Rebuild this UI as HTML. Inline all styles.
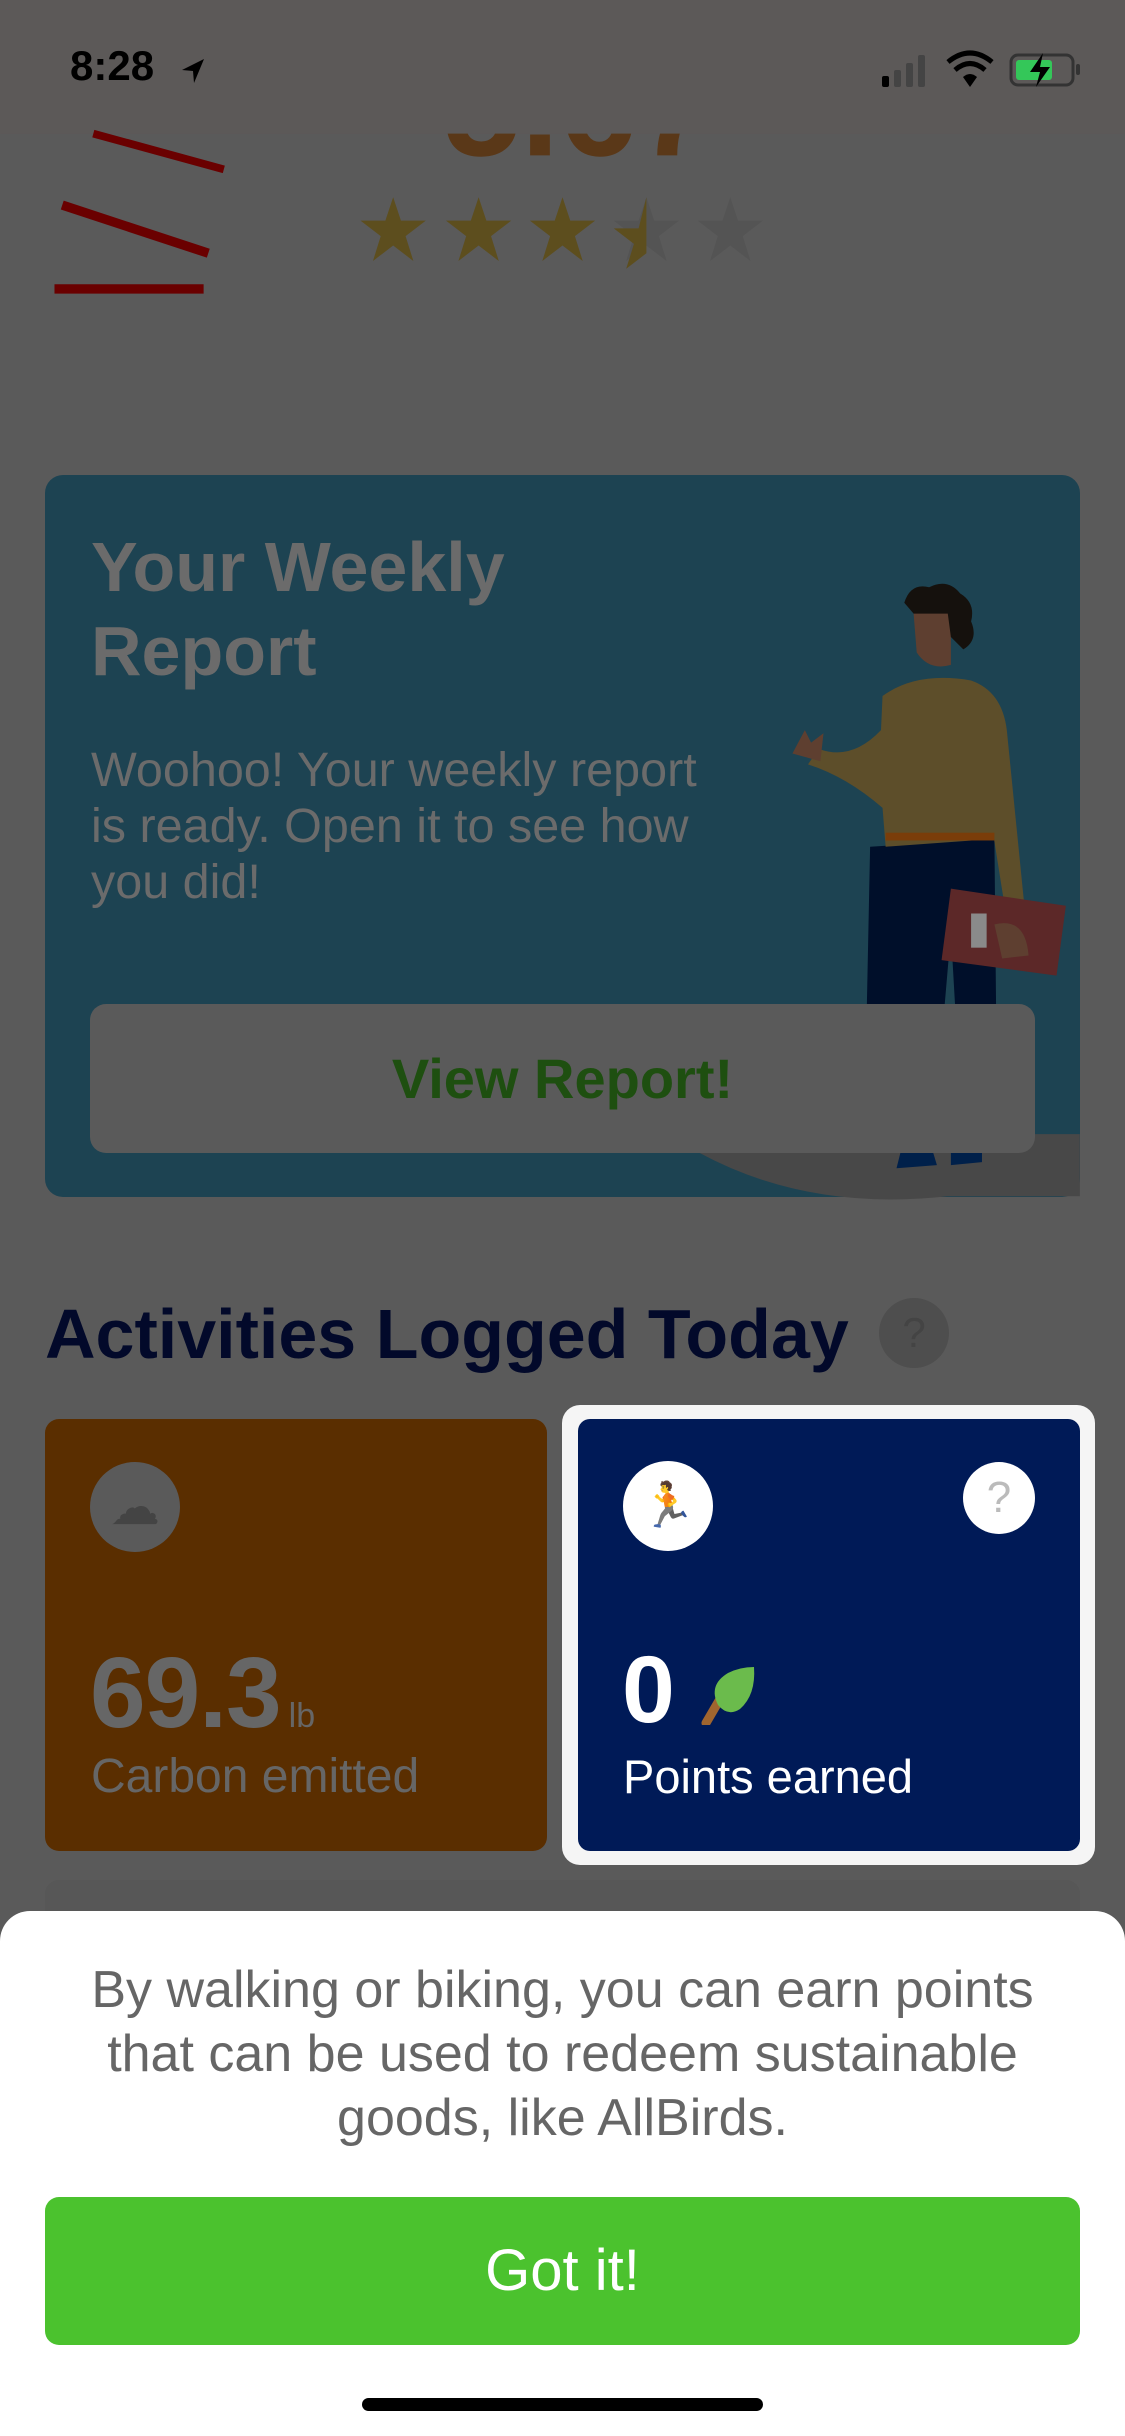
<!DOCTYPE html>
<html><head><meta charset="utf-8"><style>
*{margin:0;padding:0;box-sizing:border-box}
body{width:1125px;height:2436px;background:#5a5a5a;position:relative;overflow:hidden;font-family:"Liberation Sans",sans-serif}
.abs{position:absolute}
svg.full{position:absolute;left:0;top:0;width:1125px;height:2436px}
</style></head><body>
<div class="abs" style="left:0;top:0;width:1125px;height:134px;background:#5c5958"></div>
<div class="abs" style="left:45px;top:475px;width:1035px;height:722px;background:#1d4352;border-radius:18px;overflow:hidden"></div>
<svg class="full" viewBox="0 0 724 1568">
  <text x="285" y="100" font-family="Liberation Sans" font-weight="bold" font-size="90" fill="#5a3818">5.67</text>
  <rect x="0" y="0" width="724" height="86" fill="#5c5958"/>
  <line x1="60" y1="86" x2="144" y2="109" stroke="#6a0000" stroke-width="5"/>
  <line x1="40" y1="132" x2="134" y2="163" stroke="#6a0000" stroke-width="6"/>
  <line x1="35" y1="186" x2="131" y2="186" stroke="#6a0000" stroke-width="6"/>
  <g fill="#5d4e1e">
    <path id="st" d="M253 127 l5 15 h16 l-13 10 5 16 -13 -10 -13 10 5 -16 -13 -10 h16z"/>
    <use href="#st" x="55"/><use href="#st" x="109"/>
  </g>
  <path d="M416 127 l5 15 h16 l-13 10 5 16 -13 -10 -13 10 5 -16 -13 -10 h16z" fill="#545454"/>
  <path d="M416 127 l0 0 v36 l-13 10 5 -16 -13 -10 h16z" fill="#5d4e1e"/>
  <path d="M470 127 l5 15 h16 l-13 10 5 16 -13 -10 -13 10 5 -16 -13 -10 h16z" fill="#545454"/>
  <path d="M450 742 Q520 780 610 770 L695 770 L695 730 L555 730 Q480 735 450 742Z" fill="#484848"/>
  <path d="M560 545 L640 540 L642 740 L620 740 L612 600 L600 740 L556 740 Z" fill="#000f2a"/>
  <path d="M580 740 L600 740 L603 750 L577 752Z" fill="#00204a"/>
  <path d="M612 740 L632 740 L632 748 L612 750Z" fill="#00204a"/>
  <path d="M568 448 Q590 432 625 438 Q645 445 648 470 L660 590 L648 592 L635 510 L640 540 L570 545 L568 520 Q545 500 520 492 L527 482 Q548 490 567 470Z" fill="#5d4e2a"/>
  <rect x="570" y="536" width="70" height="5" fill="#7a3d0a"/>
  <path d="M612 572 L686 583 L680 628 L606 618Z" fill="#5c2828"/>
  <rect x="625" y="588" width="10" height="22" fill="#8a8a8a"/>
  <path d="M640 595 Q660 590 662 615 L645 617Z" fill="#5e3f30"/>
  <path d="M510 485 L518 470 L522 478 L530 472 L528 490 Z" fill="#5e3f30"/>
  <path d="M588 395 Q600 385 612 392 L612 428 Q598 432 590 420Z" fill="#5e3f30"/>
  <path d="M582 388 Q586 375 598 378 Q610 372 618 382 Q628 388 625 400 Q630 412 620 418 L612 410 L610 395 Q598 395 588 395Z" fill="#15110d"/>
</svg>
<div class="abs" style="left:91px;top:525px;font-size:70px;font-weight:bold;color:#6b6b6b;line-height:84px">Your Weekly<br>Report</div>
<div class="abs" style="left:91px;top:742px;font-size:48.5px;color:#6b6b6b;line-height:56px">Woohoo! Your weekly report<br>is ready. Open it to see how<br>you did!</div>
<div class="abs" style="left:90px;top:1004px;width:945px;height:149px;background:#5a5a5a;border-radius:16px;text-align:center;line-height:149px;font-size:56px;font-weight:bold;color:#1e4f10">View Report!</div>
<div class="abs" style="left:45px;top:1292px;font-size:70px;font-weight:bold;color:#02092a;line-height:84px">Activities Logged Today</div>
<div class="abs" style="left:879px;top:1298px;width:70px;height:70px;border-radius:50%;background:#4e4e4e;color:#444;font-size:42px;text-align:center;line-height:70px">?</div>
<div class="abs" style="left:45px;top:1419px;width:502px;height:432px;background:#5a2e00;border-radius:14px"></div>
<div class="abs" style="left:90px;top:1462px;width:90px;height:90px;border-radius:50%;background:#5a5a5a;text-align:center;line-height:90px;font-size:50px;color:#444">☁</div>
<div class="abs" style="left:90px;top:1636px;font-size:100px;font-weight:bold;color:#666;letter-spacing:-1px">69.3<span style="font-size:34px;font-weight:normal;letter-spacing:0;margin-left:8px">lb</span></div>
<div class="abs" style="left:91px;top:1749px;font-size:48px;color:#666">Carbon emitted</div>
<div class="abs" style="left:562px;top:1405px;width:533px;height:460px;background:#f5f5f5;border-radius:18px"></div>
<div class="abs" style="left:578px;top:1419px;width:502px;height:432px;background:#001a57;border-radius:12px"></div>
<div class="abs" style="left:623px;top:1461px;width:90px;height:90px;border-radius:50%;background:#fff;text-align:center;line-height:90px;font-size:44px">🏃</div>
<div class="abs" style="left:963px;top:1462px;width:72px;height:72px;border-radius:50%;background:#fff;text-align:center;line-height:72px;font-size:44px;color:#bbb">?</div>
<div class="abs" style="left:622px;top:1636px;font-size:95px;font-weight:bold;color:#fff">0</div>
<svg class="abs" style="left:698px;top:1665px" width="60" height="60" viewBox="0 0 60 60"><path d="M8 58 L22 34" stroke="#a0652f" stroke-width="9" stroke-linecap="round"/><path d="M20 40 Q10 20 30 8 Q42 2 56 2 Q58 30 42 44 Q30 52 20 40Z" fill="#6bbb4c"/></svg>
<div class="abs" style="left:623px;top:1749px;font-size:47px;color:#fff">Points earned</div>
<div class="abs" style="left:45px;top:1880px;width:1035px;height:60px;background:#575757;border-radius:14px"></div>
<div class="abs" style="left:0;top:1911px;width:1125px;height:525px;background:#fff;border-radius:30px 30px 0 0"></div>
<div class="abs" style="left:0;top:1958px;width:1125px;text-align:center;font-size:52px;line-height:64px;color:#666">By walking or biking, you can earn points<br>that can be used to redeem sustainable<br>goods, like AllBirds.</div>
<div class="abs" style="left:45px;top:2197px;width:1035px;height:148px;background:#4bc22e;border-radius:14px;text-align:center;line-height:148px;color:#fff;font-size:58px">Got it!</div>
<div class="abs" style="left:362px;top:2398px;width:401px;height:13px;background:#000;border-radius:7px"></div>
<div class="abs" style="left:70px;top:42px;font-size:42px;font-weight:bold;color:#000">8:28</div>
<svg class="abs" style="left:178px;top:56px" width="30" height="30" viewBox="0 0 30 30"><path d="M26 3 L4 14 L15 15 L16 27Z" fill="#000"/></svg>
<svg class="abs" style="left:880px;top:50px" width="205" height="40" viewBox="0 0 205 40">
 <rect x="2" y="26" width="7" height="11" rx="2" fill="#000"/><rect x="14" y="20" width="7" height="17" rx="2" fill="#444"/><rect x="26" y="13" width="7" height="24" rx="2" fill="#444"/><rect x="38" y="5" width="7" height="32" rx="2" fill="#444"/>
 <path d="M68 12 Q90 -6 112 12" stroke="#000" stroke-width="5" fill="none"/><path d="M75 20 Q90 7 105 20" stroke="#000" stroke-width="5" fill="none"/><path d="M83 27 L90 37 L97 27 Q90 21 83 27Z" fill="#000"/>
 <rect x="131" y="5" width="62" height="30" rx="7" fill="none" stroke="#333" stroke-width="3"/><rect x="136" y="10" width="36" height="20" rx="3" fill="#34c759"/><rect x="196" y="14" width="4" height="11" rx="2" fill="#333"/>
 <path d="M163 3 L150 22 L160 22 L156 37 L170 17 L160 17Z" fill="#000"/>
</svg>
</body></html>
